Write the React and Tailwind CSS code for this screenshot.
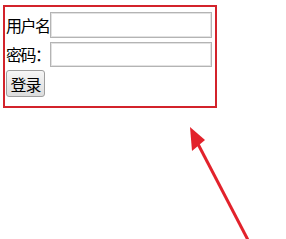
import React from 'react';

export default function App() {
  return (
    <div
      className="relative w-[286px] h-[239px] bg-white overflow-hidden text-black"
      style={{ fontFamily: '"Noto Sans CJK SC", "Liberation Sans", sans-serif' }}
    >
      <div className="pt-[5px] pl-[3px]">
        <form className="w-[214px] h-[103px] border-2 border-[#d3232b] pt-[5px] pl-[1px] flex flex-col gap-[3px]">
          <div className="flex items-center h-[26px]">
            <label className="w-[44px] shrink-0 whitespace-nowrap text-[16px] tracking-[-1.5px] leading-none">用户名</label>
            <input className="w-[162px] shrink-0 h-[26px] border border-[#b4b4b4] shadow-[inset_0_0_0_1px_#e2e2e2] outline-none" />
          </div>
          <div className="flex items-center h-[26px]">
            <label className="w-[44px] shrink-0 whitespace-nowrap text-[16px] tracking-[-1.5px] leading-none">密码：</label>
            <input
              type="password"
              className="w-[162px] shrink-0 h-[25px] border border-[#b4b4b4] shadow-[inset_0_0_0_1px_#e2e2e2] outline-none"
            />
          </div>
          <div>
            <button
              type="button"
              className="w-[39px] h-[27px] border border-[#9e9e9e] rounded-[3px] bg-gradient-to-b from-[#f6f6f6] to-[#dcdcdc] text-[16px] tracking-[-1px] leading-none"
            >
              登录
            </button>
          </div>
        </form>
      </div>

      {/* annotation arrow */}
      <svg className="absolute left-0 top-0" width="286" height="239" viewBox="0 0 286 239">
        <line x1="248" y1="240" x2="198" y2="144" stroke="#e2222b" strokeWidth="3" />
        <polygon points="190,127 192,151 205,140" fill="#e2222b" />
      </svg>
    </div>
  );
}
